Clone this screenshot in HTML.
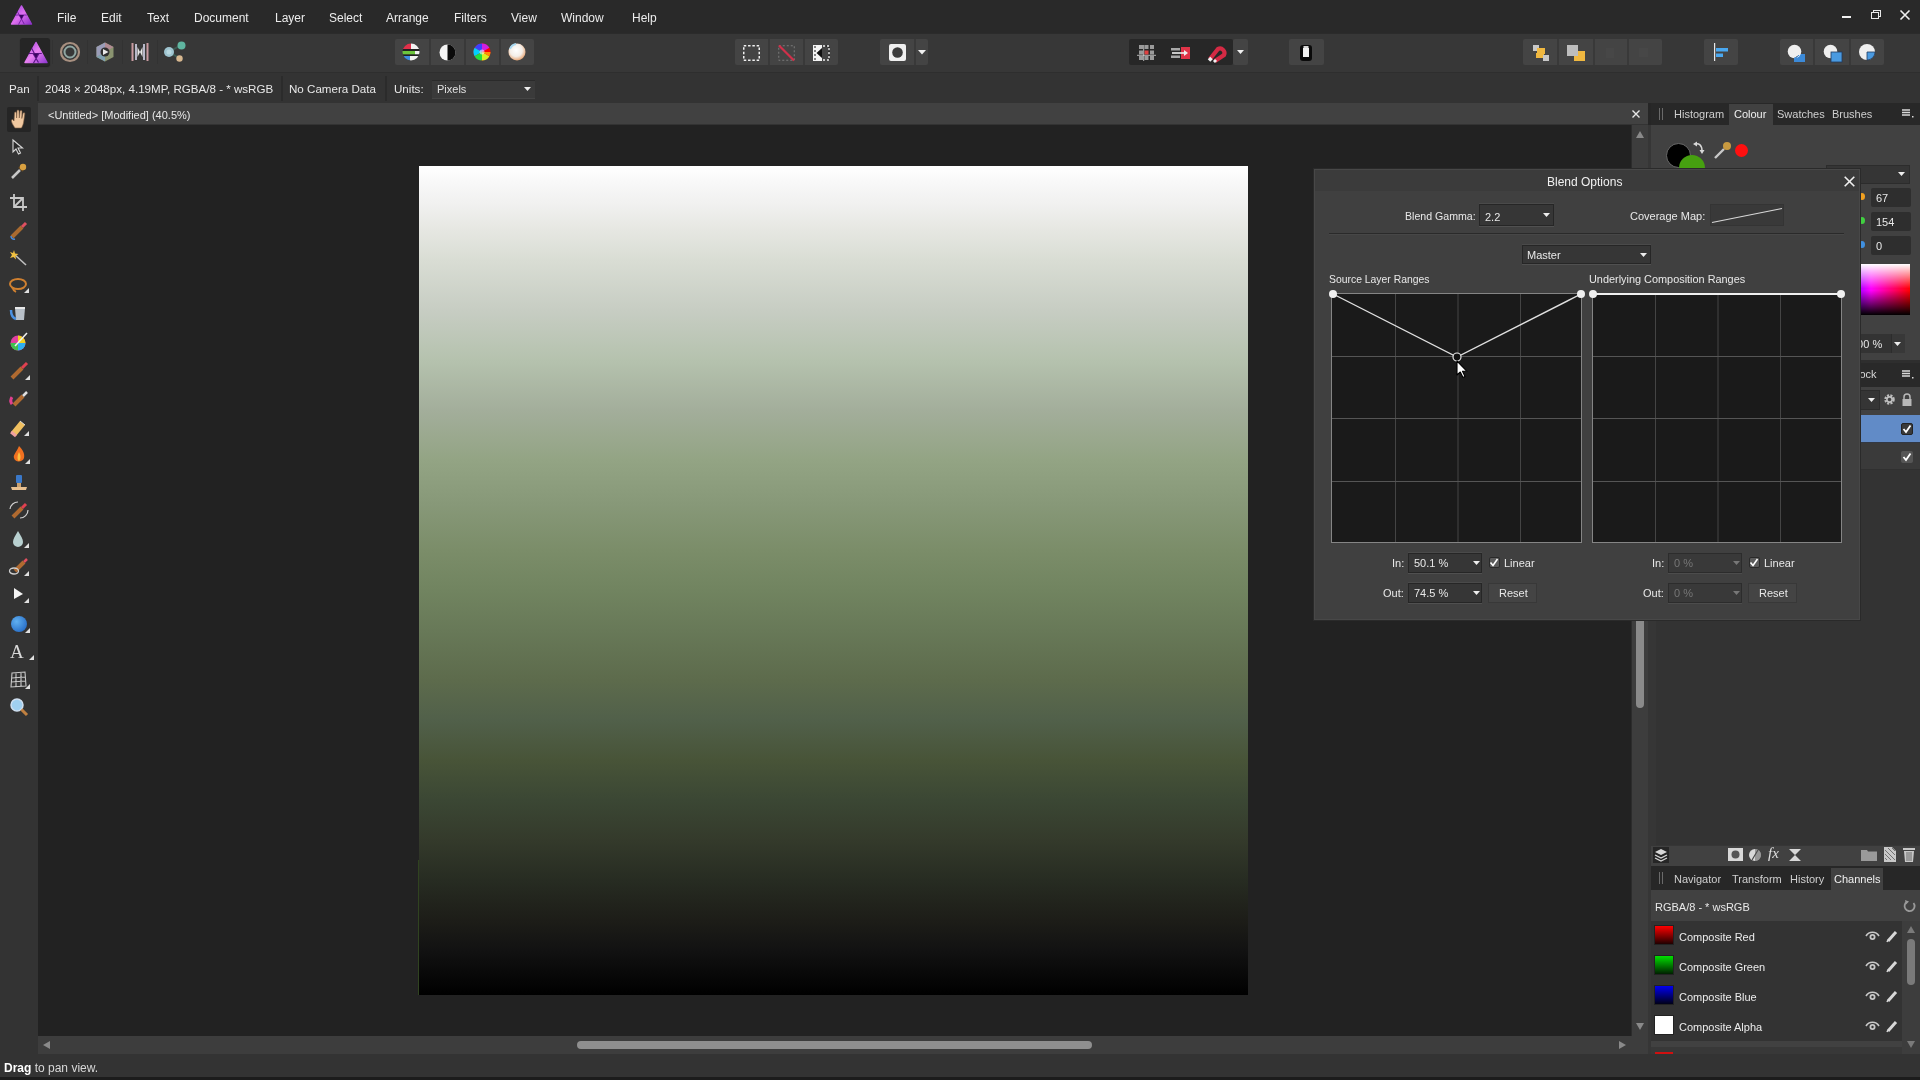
<!DOCTYPE html>
<html><head><meta charset="utf-8">
<style>
*{margin:0;padding:0;box-sizing:border-box}
html,body{width:1920px;height:1080px;overflow:hidden;background:#2e2e2e;font-family:"Liberation Sans",sans-serif;color:#e8e8e8}
.a{position:absolute}
.t{position:absolute;white-space:nowrap;font-size:12px;line-height:14px;will-change:transform}
svg{position:absolute;overflow:visible}
#menubar{left:0;top:0;width:1920px;height:33px;background:#292929}
#toolbar{left:0;top:33px;width:1920px;height:40px;background:#373737;border-top:1px solid #2b2b2b;border-bottom:1px solid #2e2e2e}
#ctx{left:0;top:73px;width:1920px;height:30px;background:#333333}
#tabbar{left:38px;top:103px;width:1612px;height:22px;background:#414141;border-bottom:1px solid #333333}
#tools{left:0;top:103px;width:38px;height:951px;background:#333333}
#canvasbg{left:38px;top:125px;width:1593px;height:911px;background:#222222}
#doc{left:419px;top:166px;width:829px;height:829px;background:linear-gradient(to bottom,#ffffff 0px,#f7f7f7 19px,#f1f1f0 37px,#e6e7e2 64px,#d9ddd4 94px,#c7cdc3 144px,#b5c2ae 194px,#a3ae9b 244px,#93a484 294px,#879878 339px,#7b8d69 384px,#718460 424px,#687958 464px,#5d6b4c 514px,#51604a 554px,#485438 594px,#3b4734 634px,#343a2b 674px,#272c22 714px,#1d1d18 754px,#121212 784px,#060606 814px,#000 829px)}
#vscroll{left:1631px;top:125px;width:17px;height:911px;background:#3d3d3d}
#hscroll{left:38px;top:1036px;width:1610px;height:18px;background:#3d3d3d}
#status{left:0;top:1054px;width:1920px;height:26px;background:#333333;border-bottom:3px solid #1c1c1c}
#rpanel{left:1648px;top:103px;width:272px;height:951px;background:#333333;border-left:8px solid #363636}
.menu{font-size:12px;top:11px;color:#ececec}
.grp{position:absolute;top:39px;height:26px;background:#444444;border-radius:2px}
.sep{position:absolute;top:39px;width:2px;height:26px;background:#393939}
.ctxt{font-size:11.6px;top:82px;color:#e8e8e8}
.csep{position:absolute;top:76px;width:2px;height:25px;background:#2b2b2b}
</style></head><body>
<div id="menubar" class="a"></div>
<div id="toolbar" class="a"></div>
<div id="ctx" class="a"></div>
<div id="tools" class="a"></div>
<div id="tabbar" class="a"></div>
<div id="canvasbg" class="a"></div>
<div id="doc" class="a"></div>
<div id="vscroll" class="a"></div>
<div id="hscroll" class="a"></div>
<div id="status" class="a"></div>
<div id="rpanel" class="a"></div>

<!-- app logo -->
<svg style="left:10px;top:5px" width="23" height="20" viewBox="0 0 24 22">
 <defs><linearGradient id="lg1" x1="0" y1="0" x2="1" y2="1"><stop offset="0" stop-color="#9a40e0"/><stop offset="0.5" stop-color="#e070f0"/><stop offset="1" stop-color="#8a30c8"/></linearGradient></defs>
 <path d="M12 1 L23 21 L1 21 Z" fill="url(#lg1)" stroke="url(#lg1)" stroke-width="1.5" stroke-linejoin="round"/>
 <path d="M5 11 L17.8 11 M14.5 11 L8.7 21.5 M9.5 11 L15 21 M12 15.5 L7 6.5" stroke="#5a1090" stroke-width="1" opacity="0.8"/>
 <path d="M9.5 11 L14.5 11 L12 15.5 Z" fill="#3a0560"/>
</svg>
<!-- menu text -->
<div class="t menu" style="left:57px">File</div>
<div class="t menu" style="left:101px">Edit</div>
<div class="t menu" style="left:147px">Text</div>
<div class="t menu" style="left:194px">Document</div>
<div class="t menu" style="left:275px">Layer</div>
<div class="t menu" style="left:329px">Select</div>
<div class="t menu" style="left:386px">Arrange</div>
<div class="t menu" style="left:454px">Filters</div>
<div class="t menu" style="left:511px">View</div>
<div class="t menu" style="left:561px">Window</div>
<div class="t menu" style="left:632px">Help</div>
<!-- window controls -->
<div class="a" style="left:1842px;top:16px;width:9px;height:2px;background:#f0f0f0"></div>
<div class="a" style="left:1873px;top:10px;width:8px;height:7px;border:1.5px solid #e8e8e8;border-left-width:1.5px"></div>
<div class="a" style="left:1871px;top:12px;width:8px;height:7px;border:1.5px solid #e8e8e8;background:#262626"></div>
<svg style="left:1900px;top:10px" width="10" height="10" viewBox="0 0 10 10"><path d="M0.5 0.5 L9.5 9.5 M9.5 0.5 L0.5 9.5" stroke="#f0f0f0" stroke-width="1.6"/></svg>
<!-- toolbar: personas -->
<div class="a" style="left:20px;top:38px;width:30px;height:28px;background:#252525;border-radius:3px;box-shadow:0 1px 1px #1e1e1e"></div>
<div class="a" style="left:52px;top:40px;width:1px;height:24px;background:#323232"></div>
<div class="a" style="left:87px;top:40px;width:1px;height:24px;background:#323232"></div>
<div class="a" style="left:122px;top:40px;width:1px;height:24px;background:#323232"></div>
<div class="a" style="left:157px;top:40px;width:1px;height:24px;background:#323232"></div>
<svg style="left:24px;top:41px" width="24" height="23" viewBox="0 0 24 22">
 <defs><linearGradient id="lg2" x1="0" y1="0" x2="1" y2="1"><stop offset="0" stop-color="#a040e0"/><stop offset="0.5" stop-color="#e880f0"/><stop offset="1" stop-color="#9038d0"/></linearGradient></defs>
 <path d="M12 1 L23 21 L1 21 Z" fill="url(#lg2)" stroke="url(#lg2)" stroke-width="1.5" stroke-linejoin="round"/>
 <path d="M4.5 12 L17.8 12 M15 12 L9.5 21.5 M9 12 L14.5 21 M12.5 16 L7.5 6.5" stroke="#4a0878" stroke-width="1.2" opacity="0.85"/>
 <path d="M9.5 12 L14.5 12 L12 16.5 Z" fill="#3a0560"/>
</svg>
<svg style="left:59px;top:41px" width="22" height="22" viewBox="0 0 22 22">
 <circle cx="11" cy="11" r="9" fill="none" stroke="#a89080" stroke-width="2.2"/>
 <circle cx="11" cy="11" r="5.5" fill="none" stroke="#8fa6a2" stroke-width="2"/>
</svg>
<svg style="left:95px;top:42px" width="20" height="20" viewBox="0 0 20 20">
 <path d="M10 0.5 L18.5 5 L18.5 15 L10 19.5 L1.5 15 L1.5 5 Z" fill="#8a9470"/>
 <path d="M10 0.5 L18.5 5 L10 10 Z" fill="#b08a92"/>
 <path d="M1.5 5 L10 0.5 L10 10 L1.5 15Z" fill="#9a9cb8"/>
 <path d="M1.5 15 L10 10 L10 19.5 Z" fill="#7fa0b0"/>
 <circle cx="10" cy="10" r="4.5" fill="#2f2f2f"/>
 <path d="M8 7 L13.5 10 L8 13 Z" fill="#e8e8e8"/>
</svg>
<svg style="left:130px;top:42px" width="20" height="20" viewBox="0 0 20 20">
 <rect x="1.5" y="1" width="2" height="18" fill="#c89aa0"/>
 <rect x="5" y="2" width="2" height="16" fill="#b8b8c8"/>
 <rect x="13" y="2" width="2" height="16" fill="#b8b8c8"/>
 <rect x="16.5" y="1" width="2" height="18" fill="#c89aa0"/>
 <path d="M7.5 5 L10 10 L7.5 15 Z M12.5 5 L10 10 L12.5 15 Z" fill="#e8e8e8"/>
</svg>
<svg style="left:163px;top:41px" width="24" height="22" viewBox="0 0 24 22">
 <path d="M6 11 L18 4 M6 11 L16 17" stroke="#3b5a52" stroke-width="2"/>
 <circle cx="6" cy="11" r="5" fill="#9ec4d0"/>
 <circle cx="6" cy="11" r="2.5" fill="#b8d8e0"/>
 <circle cx="18.5" cy="4.5" r="4" fill="#5fb5a0"/>
 <circle cx="16.5" cy="17.5" r="3.2" fill="#d8b890"/>
</svg>

<!-- group 2 -->
<div class="grp" style="left:395px;width:139px"></div>
<div class="sep" style="left:429px"></div><div class="sep" style="left:464px"></div><div class="sep" style="left:499px"></div>
<svg style="left:402px;top:43px" width="18" height="18" viewBox="0 0 18 18">
 <defs><clipPath id="c1"><circle cx="9" cy="9" r="8.5"/></clipPath></defs>
 <g clip-path="url(#c1)">
 <rect x="0" y="0" width="9" height="6" fill="#e0304a"/><rect x="9" y="0" width="9" height="6" fill="#f2f2f2"/>
 <rect x="0" y="6" width="18" height="2" fill="#202020"/>
 <rect x="0" y="8" width="13" height="3.5" fill="#6cc43c"/><rect x="13" y="8" width="5" height="3.5" fill="#f0f0f0"/>
 <rect x="0" y="11.5" width="18" height="1.5" fill="#202020"/>
 <rect x="0" y="13" width="8" height="5" fill="#3c8ae0"/><rect x="8" y="13" width="10" height="5" fill="#f2f2f2"/>
 </g>
</svg>
<svg style="left:439px;top:44px" width="17" height="17" viewBox="0 0 17 17">
 <circle cx="8.5" cy="8.5" r="8" fill="#f4f4f4"/>
 <path d="M8.5 0.5 A8 8 0 0 1 8.5 16.5 Z" fill="#0a0a0a"/>
</svg>
<svg style="left:473px;top:43px" width="18" height="18" viewBox="0 0 18 18">
 <circle cx="9" cy="9" r="8.5" fill="#ff0000"/>
 <path d="M9 9 L9 0.5 A8.5 8.5 0 0 0 1.6 4.8 Z" fill="#3a40ff"/>
 <path d="M9 9 L1.6 4.8 A8.5 8.5 0 0 0 1.6 13.2 Z" fill="#00d0ff"/>
 <path d="M9 9 L1.6 13.2 A8.5 8.5 0 0 0 9 17.5 Z" fill="#20e040"/>
 <path d="M9 9 L9 17.5 A8.5 8.5 0 0 0 16.4 13.2 Z" fill="#d8f020"/>
 <path d="M9 9 L16.4 13.2 A8.5 8.5 0 0 0 17.5 9 Z" fill="#ff9000"/>
 <path d="M9 9 L9 0.5 A8.5 8.5 0 0 1 16.4 4.8 Z" fill="#d020e0"/>
 <circle cx="9" cy="9" r="2.5" fill="#f0f0f0" opacity="0.6"/>
</svg>
<svg style="left:508px;top:43px" width="18" height="18" viewBox="0 0 18 18">
 <defs><radialGradient id="rg1" cx="0.45" cy="0.4" r="0.6"><stop offset="0" stop-color="#ffffff"/><stop offset="0.6" stop-color="#f4eee8"/><stop offset="1" stop-color="#e8a878"/></radialGradient></defs>
 <circle cx="9" cy="9" r="8.5" fill="url(#rg1)"/>
 <path d="M2 6 A8 8 0 0 1 8 1" stroke="#a8d8f0" stroke-width="2" fill="none"/>
</svg>

<!-- group 3 -->
<div class="grp" style="left:735px;width:103px"></div>
<div class="sep" style="left:768px"></div><div class="sep" style="left:803px"></div>
<svg style="left:743px;top:45px" width="17" height="16" viewBox="0 0 17 16"><rect x="0.75" y="0.75" width="15.5" height="14.5" fill="none" stroke="#f0f0f0" stroke-width="1.5" stroke-dasharray="2.5 1.8"/></svg>
<svg style="left:778px;top:45px" width="17" height="16" viewBox="0 0 17 16"><rect x="0.75" y="0.75" width="15.5" height="14.5" fill="none" stroke="#7a7a7a" stroke-width="1" stroke-dasharray="2 2"/><path d="M1 0.5 L16 15.5" stroke="#d0304a" stroke-width="2.2"/></svg>
<svg style="left:813px;top:45px" width="17" height="16" viewBox="0 0 17 16"><rect x="0" y="0" width="9" height="16" fill="#f4f4f4"/><path d="M9 3 L3.5 8 L9 13 Z" fill="#101010"/><path d="M2 1 L2 15 M13 1 L16 1 L16 15 L13 15" stroke="#101010" stroke-width="1" stroke-dasharray="2 2" fill="none"/><path d="M10 1 L16 1 L16 15 L10 15" stroke="#f0f0f0" stroke-width="1.3" stroke-dasharray="2 2" fill="none"/></svg>

<!-- group 4 -->
<div class="grp" style="left:880px;width:48px"></div>
<div class="sep" style="left:914px"></div>
<svg style="left:889px;top:44px" width="17" height="17" viewBox="0 0 17 17"><rect x="0" y="0" width="17" height="17" rx="2" fill="#efefef"/><circle cx="8.5" cy="8.5" r="5.3" fill="#3a3a3a"/></svg>
<svg style="left:918px;top:50px" width="8" height="5" viewBox="0 0 8 5"><path d="M0 0 L8 0 L4 4.5 Z" fill="#f2f2f2"/></svg>

<!-- group 5 -->
<div class="grp" style="left:1129px;width:104px;background:#272727"></div>
<div class="grp" style="left:1233px;width:15px;background:#444444"></div>
<svg style="left:1137px;top:45px" width="19" height="16" viewBox="0 0 19 16">
 <rect x="2" y="0" width="4" height="4" fill="#9a9a9a"/><rect x="7.5" y="0" width="4" height="4" fill="#9a9a9a"/><rect x="13" y="0" width="4" height="4" fill="#9a9a9a"/>
 <rect x="2" y="5.5" width="4" height="4" fill="#9a9a9a"/><rect x="7.5" y="5.5" width="4" height="4" fill="#e04040"/><rect x="13" y="5.5" width="4" height="4" fill="#9a9a9a"/>
 <rect x="2" y="11" width="4" height="4" fill="#9a9a9a"/><rect x="7.5" y="11" width="4" height="4" fill="#9a9a9a"/><rect x="13" y="11" width="4" height="4" fill="#9a9a9a"/>
 <path d="M0 10.3 L19 10.3 M6.7 0 L6.7 16" stroke="#d8d8d8" stroke-width="0.8"/>
</svg>
<svg style="left:1171px;top:47px" width="20" height="12" viewBox="0 0 20 12">
 <rect x="0" y="1" width="9" height="2.5" fill="#a8a8a8"/><rect x="0" y="8.5" width="9" height="2.5" fill="#a8a8a8"/>
 <rect x="10" y="0" width="9" height="12" fill="#e03448"/>
 <path d="M1 6 L15 6" stroke="#f0f0f0" stroke-width="1.6"/><path d="M13 3 L17 6 L13 9 Z" fill="#f0f0f0"/>
</svg>
<svg style="left:1206px;top:44px" width="20" height="18" viewBox="0 0 20 18">
 <path d="M4 15 L12 5 A4.5 4.5 0 0 1 18 11 L9 17" fill="none" stroke="#d42a44" stroke-width="4.2"/>
 <path d="M3 14 L5.5 16.5" stroke="#f0f0f0" stroke-width="3.5"/><path d="M8 16 L10 18" stroke="#f0f0f0" stroke-width="3"/>
</svg>
<svg style="left:1237px;top:50px" width="7" height="5" viewBox="0 0 7 5"><path d="M0 0 L7 0 L3.5 4 Z" fill="#f0f0f0"/></svg>

<!-- group 6 -->
<div class="grp" style="left:1289px;width:35px"></div>
<svg style="left:1299px;top:44px" width="14" height="18" viewBox="0 0 14 18"><rect x="1" y="1" width="12" height="16" rx="3" fill="#0a0a0a"/><rect x="4" y="4" width="6" height="9" fill="#f2f2f2"/><rect x="4.5" y="2" width="5" height="2" fill="#d8d8d8"/></svg>

<!-- group 7 -->
<div class="grp" style="left:1523px;width:139px"></div>
<div class="sep" style="left:1557px"></div><div class="sep" style="left:1593px"></div><div class="sep" style="left:1627px"></div>
<svg style="left:1531px;top:44px" width="20" height="18" viewBox="0 0 20 18">
 <rect x="2" y="1" width="6" height="6" fill="#c8c8c8"/><rect x="6" y="4" width="8" height="6" fill="#f0b840"/><rect x="5" y="9" width="8" height="5" fill="#f0b840"/><rect x="12" y="11" width="6" height="6" fill="#c8c8c8"/>
</svg>
<svg style="left:1566px;top:44px" width="20" height="18" viewBox="0 0 20 18">
 <rect x="12" y="7" width="7" height="10" fill="#f0b840"/><rect x="8" y="12" width="11" height="5" fill="#f0b840"/><rect x="1" y="1" width="11" height="11" fill="#bdbdbd"/>
</svg>
<svg style="left:1603px;top:46px" width="16" height="14" viewBox="0 0 16 14"><rect x="3" y="2" width="8" height="10" fill="#474747"/></svg>
<svg style="left:1637px;top:46px" width="16" height="14" viewBox="0 0 16 14"><rect x="2" y="2" width="9" height="9" fill="#474747"/></svg>

<!-- group 8 -->
<div class="grp" style="left:1704px;width:34px"></div>
<svg style="left:1713px;top:43px" width="18" height="18" viewBox="0 0 18 18"><rect x="1" y="0" width="1.2" height="18" fill="#e8e8e8"/><rect x="3" y="5" width="12" height="3.5" fill="#4aa8f0"/><rect x="3" y="10.5" width="7" height="3.5" fill="#4aa8f0"/></svg>

<!-- group 9 -->
<div class="grp" style="left:1780px;width:104px"></div>
<div class="sep" style="left:1813px"></div><div class="sep" style="left:1849px"></div>
<svg style="left:1786px;top:43px" width="22" height="20" viewBox="0 0 22 20"><path d="M8 11 L19 11 L19 19 L8 19 Z" fill="#3c8ad8"/><circle cx="8.5" cy="8.5" r="6.8" fill="#efefef"/><path d="M13 12 A6.8 6.8 0 0 1 8 15.3" stroke="#3c8ad8" stroke-width="1"/></svg>
<svg style="left:1822px;top:43px" width="22" height="20" viewBox="0 0 22 20"><circle cx="8.5" cy="8.5" r="6.8" fill="#efefef"/><rect x="9" y="9" width="11" height="10" fill="#4a9ae0" stroke="#1e3a60" stroke-width="0.8"/></svg>
<svg style="left:1857px;top:42px" width="22" height="20" viewBox="0 0 22 20"><circle cx="10" cy="10" r="8" fill="#efefef"/><path d="M10 10 L18 10 A8 8 0 0 1 10 18 Z" fill="#4a9ae0" stroke="#1e3a60" stroke-width="0.8"/></svg>

<!-- context bar -->
<div class="t ctxt" style="left:9px">Pan</div>
<div class="csep" style="left:37px"></div>
<div class="t ctxt" style="left:45px">2048 × 2048px, 4.19MP, RGBA/8 - * wsRGB</div>
<div class="csep" style="left:281px"></div>
<div class="t ctxt" style="left:289px">No Camera Data</div>
<div class="csep" style="left:385px"></div>
<div class="t ctxt" style="left:394px">Units:</div>
<div class="a" style="left:432px;top:80px;width:103px;height:19px;background:#3a3a3a;border-top:1px solid #2a2a2a;border-bottom:1px solid #444"></div>
<div class="t" style="left:437px;top:82px;font-size:11px;color:#e0e0e0">Pixels</div>
<svg style="left:524px;top:87px" width="7" height="5" viewBox="0 0 7 5"><path d="M0 0 L7 0 L3.5 4 Z" fill="#eeeeee"/></svg>

<!-- document tab -->
<div class="t" style="left:48px;top:108px;font-size:11px;color:#e8e8e8">&lt;Untitled&gt; [Modified] (40.5%)</div>
<svg style="left:1632px;top:110px" width="8" height="8" viewBox="0 0 8 8"><path d="M0.5 0.5 L7.5 7.5 M7.5 0.5 L0.5 7.5" stroke="#e8e8e8" stroke-width="1.4"/></svg>
<!-- left tools -->
<div class="a" style="left:7px;top:107px;width:24px;height:25px;background:#252525;border-radius:2px"></div>
<svg style="left:10px;top:109px" width="18" height="20" viewBox="0 0 18 20">
 <path d="M5 19 C3 16 1 13 1.5 11 C2 10 3 10.5 4 12 L4.5 4 C4.6 2.5 6.3 2.5 6.4 4 L6.6 9 L7 2 C7.1 0.5 8.9 0.5 9 2 L9.3 9 L10 2.5 C10.2 1 12 1 12 2.5 L11.8 9.5 L13 4.5 C13.3 3.2 15 3.4 14.8 4.8 L13.8 12 C13.5 15 12.5 17 11.5 19 Z" fill="#f0c8a0" stroke="#7a5a40" stroke-width="0.6"/>
</svg>
<svg style="left:12px;top:139px" width="14" height="16" viewBox="0 0 14 16"><path d="M1 1 L1 13 L4 10 L6.5 15 L8.5 14 L6 9 L10.5 9 Z" fill="#2a2a2a" stroke="#d8d8d8" stroke-width="1.1"/></svg>
<svg style="left:10px;top:163px" width="18" height="17" viewBox="0 0 18 17"><path d="M2 15 L10 7" stroke="#c8c8c8" stroke-width="2.5"/><path d="M9 4 L13 8" stroke="#6a4a20" stroke-width="2"/><circle cx="13" cy="4" r="3.2" fill="#d8a040"/></svg>
<svg style="left:10px;top:194px" width="18" height="17" viewBox="0 0 18 17"><path d="M4 0 L4 13 L17 13 M0 4 L13 4 L13 17 M4 13 L13 4" stroke="#c8c8c8" stroke-width="1.8" fill="none"/></svg>
<svg style="left:9px;top:222px" width="20" height="18" viewBox="0 0 20 18"><path d="M3 15 L13 5" stroke="#a86a30" stroke-width="4"/><path d="M13 5 L17 1" stroke="#e05060" stroke-width="3"/><path d="M2 14 A3 3 0 0 0 6 17" stroke="#4a8ad8" stroke-width="1.5" fill="none"/></svg>
<svg style="left:9px;top:249px" width="20" height="18" viewBox="0 0 20 18"><path d="M6 6 L17 16" stroke="#c0c0c0" stroke-width="1.6"/><path d="M5 1 L6 4.5 L9.5 5 L6.5 7 L7 10.5 L4.5 8 L1 9 L3 6 L1 3 L4 4 Z" fill="#f0c040"/></svg>
<svg style="left:8px;top:276px" width="22" height="18" viewBox="0 0 22 18"><ellipse cx="10" cy="8" rx="8" ry="5" fill="none" stroke="#d08030" stroke-width="2"/><path d="M4 11 C5 14 6 15 8 16" stroke="#d08030" stroke-width="1.8" fill="none"/><path d="M21 12 L21 17 L16 17 Z" fill="#e0e0e0"/></svg>
<svg style="left:9px;top:304px" width="20" height="18" viewBox="0 0 20 18"><path d="M6 4 L16 4 L15 16 L7 16 Z" fill="#b8c0c8"/><path d="M2 6 C2 12 4 14 7 15" stroke="#4a90e0" stroke-width="2.5" fill="none"/><path d="M6 4 L16 4" stroke="#e8e8e8" stroke-width="2"/></svg>
<svg style="left:9px;top:332px" width="20" height="20" viewBox="0 0 20 20"><circle cx="9" cy="11" r="7.5" fill="#e040a0"/><path d="M9 11 L9 3.5 A7.5 7.5 0 0 1 16.5 11 Z" fill="#f0d020"/><path d="M9 11 L16.5 11 A7.5 7.5 0 0 1 9 18.5 Z" fill="#30b0f0"/><path d="M9 11 L9 18.5 A7.5 7.5 0 0 1 1.5 11 Z" fill="#40c050"/><path d="M6 14 L18 1" stroke="#f0f0f0" stroke-width="1.5"/></svg>
<svg style="left:9px;top:361px" width="22" height="20" viewBox="0 0 22 20"><path d="M3 17 L13 7" stroke="#b06a30" stroke-width="4"/><path d="M13 7 L18 2" stroke="#e04050" stroke-width="3"/><path d="M21 14 L21 19 L16 19 Z" fill="#e0e0e0"/></svg>
<svg style="left:8px;top:389px" width="22" height="20" viewBox="0 0 22 20"><path d="M4 15 A6 6 0 0 1 4 8" stroke="#e04090" stroke-width="3" fill="none"/><path d="M6 16 L15 7" stroke="#b06a30" stroke-width="4"/><path d="M15 7 L19 3" stroke="#e0e0e0" stroke-width="2.5"/></svg>
<svg style="left:8px;top:417px" width="22" height="20" viewBox="0 0 22 20"><path d="M3 15 L12 4 L17 8 L8 19 Z" fill="#f0c060"/><path d="M3 15 L8 19" stroke="#f0a0a0" stroke-width="3"/><path d="M12 4 L17 8" stroke="#e0e0e0" stroke-width="1"/><path d="M21 14 L21 19 L16 19 Z" fill="#e0e0e0"/></svg>
<svg style="left:9px;top:445px" width="22" height="20" viewBox="0 0 22 20"><path d="M10 1 C14 5 16 9 15 13 C14 17 6 18 5 13 C4 10 7 8 10 1 Z" fill="#f07020"/><path d="M10 7 C12 10 12 14 10 16 C8 15 8 11 10 7Z" fill="#f8c040"/><path d="M21 14 L21 19 L16 19 Z" fill="#e0e0e0"/></svg>
<svg style="left:9px;top:474px" width="20" height="18" viewBox="0 0 20 18"><rect x="7" y="1" width="6" height="8" rx="1" fill="#3a78c8"/><path d="M2 13 L18 13 L17 16 L3 16 Z" fill="#e8c090"/><rect x="8" y="9" width="4" height="4" fill="#c8a070"/></svg>
<svg style="left:9px;top:501px" width="20" height="18" viewBox="0 0 20 18"><path d="M4 16 L13 7" stroke="#b06a30" stroke-width="4"/><path d="M13 7 L17 3" stroke="#e04050" stroke-width="3"/><path d="M1 8 A8 8 0 0 1 9 1 M11 17 A8 8 0 0 0 19 9" stroke="#d0d0d0" stroke-width="1.2" fill="none"/></svg>
<svg style="left:10px;top:529px" width="20" height="20" viewBox="0 0 20 20"><path d="M8 2 C11 7 13 10 13 13 A5 5 0 0 1 3 13 C3 10 5 7 8 2 Z" fill="#b8d0d0"/><path d="M19 14 L19 19 L14 19 Z" fill="#e0e0e0"/></svg>
<svg style="left:8px;top:557px" width="22" height="20" viewBox="0 0 22 20"><path d="M7 14 L16 5" stroke="#b06a30" stroke-width="4"/><path d="M16 5 L19 2" stroke="#e05060" stroke-width="2.5"/><ellipse cx="6" cy="14" rx="4.5" ry="3" fill="none" stroke="#d0d0d0" stroke-width="1.3"/><path d="M21 14 L21 19 L16 19 Z" fill="#e0e0e0"/></svg>
<svg style="left:12px;top:586px" width="20" height="18" viewBox="0 0 20 18"><path d="M2 2 L11 8 L2 13 Z" fill="#f4f4f4"/><path d="M17 12 L17 17 L12 17 Z" fill="#e0e0e0"/></svg>
<svg style="left:9px;top:614px" width="22" height="20" viewBox="0 0 22 20"><defs><radialGradient id="rgb1" cx="0.35" cy="0.35" r="0.7"><stop offset="0" stop-color="#60b0f0"/><stop offset="1" stop-color="#2a70c8"/></radialGradient></defs><circle cx="10" cy="10" r="8" fill="url(#rgb1)"/><path d="M21 14 L21 19 L16 19 Z" fill="#e0e0e0"/></svg>
<div class="t" style="left:10px;top:642px;font-family:'Liberation Serif',serif;font-size:19px;line-height:19px;color:#d8d8d8">A</div>
<svg style="left:29px;top:655px" width="6" height="6" viewBox="0 0 6 6"><path d="M5 0 L5 5 L0 5 Z" fill="#e0e0e0"/></svg>
<svg style="left:9px;top:670px" width="22" height="20" viewBox="0 0 22 20"><path d="M3 3 L16 2 L17 16 L2 17 Z M3 8 L16 7 M2 12 L17 11 M7 2.5 L7 16.5 M12 2.2 L12 16.4" stroke="#c8c8c8" stroke-width="1.1" fill="none"/><path d="M21 14 L21 19 L16 19 Z" fill="#e0e0e0"/></svg>
<svg style="left:9px;top:697px" width="20" height="20" viewBox="0 0 20 20"><circle cx="8" cy="8" r="6" fill="#a0d0f0" stroke="#d0e0f0" stroke-width="1.5"/><path d="M12.5 12.5 L18 18" stroke="#c08040" stroke-width="3"/></svg>

<!-- canvas details -->
<div class="a" style="left:418px;top:860px;width:1px;height:135px;background:#3a5a20;opacity:0.6"></div>

<!-- vertical scroll -->
<div class="a" style="left:1631px;top:125px;width:1px;height:911px;background:#2c2c2c"></div>
<svg style="left:1636px;top:131px" width="8" height="7" viewBox="0 0 8 7"><path d="M0 7 L8 7 L4 0 Z" fill="#8a8a8a"/></svg>
<div class="a" style="left:1636px;top:612px;width:8px;height:96px;background:#8a8a8a;border-radius:4px"></div>
<svg style="left:1636px;top:1023px" width="8" height="7" viewBox="0 0 8 7"><path d="M0 0 L8 0 L4 7 Z" fill="#8a8a8a"/></svg>
<!-- horizontal scroll -->
<svg style="left:43px;top:1041px" width="7" height="8" viewBox="0 0 7 8"><path d="M7 0 L7 8 L0 4 Z" fill="#8a8a8a"/></svg>
<div class="a" style="left:577px;top:1041px;width:515px;height:8px;background:#8f8f8f;border-radius:4px"></div>
<svg style="left:1619px;top:1041px" width="7" height="8" viewBox="0 0 7 8"><path d="M0 0 L0 8 L7 4 Z" fill="#8a8a8a"/></svg>
<!-- status -->
<div class="t" style="left:4px;top:1061px;font-size:12px;color:#d8d8d8"><b style="color:#fff">Drag</b> to pan view.</div>
<!-- right panel -->
<div class="a" style="left:1648px;top:103px;width:3px;height:22px;background:#262626"></div>
<div class="a" style="left:1651px;top:103px;width:269px;height:22px;background:#282828"></div>
<div class="a" style="left:1659px;top:108px;width:1px;height:12px;background:#6a6a6a"></div>
<div class="a" style="left:1662px;top:108px;width:1px;height:12px;background:#6a6a6a"></div>
<div class="a" style="left:1729px;top:104px;width:44px;height:21px;background:#414141"></div>
<div class="t" style="left:1674px;top:107px;font-size:11px;color:#cfcfcf">Histogram</div>
<div class="t" style="left:1734px;top:107px;font-size:11px;color:#f0f0f0">Colour</div>
<div class="t" style="left:1777px;top:107px;font-size:11px;color:#cfcfcf">Swatches</div>
<div class="t" style="left:1832px;top:107px;font-size:11px;color:#cfcfcf">Brushes</div>
<svg style="left:1902px;top:109px" width="12" height="10" viewBox="0 0 12 10"><path d="M0 1 L8 1 M0 3.5 L8 3.5 M0 6 L8 6" stroke="#d8d8d8" stroke-width="1.5"/><rect x="10" y="7" width="1.5" height="1.5" fill="#d8d8d8"/></svg>
<!-- colour panel body -->
<div class="a" style="left:1651px;top:125px;width:269px;height:236px;background:#414141"></div>
<div class="a" style="left:1666px;top:143px;width:25px;height:25px;border-radius:50%;background:#000;border:1.5px solid #6a6a6a"></div>
<div class="a" style="left:1679px;top:155px;width:26px;height:26px;border-radius:50%;background:#46a010"></div>
<svg style="left:1693px;top:141px" width="12" height="14" viewBox="0 0 12 14"><path d="M2 3 C6 2 9 4 9 10" stroke="#d8d8d8" stroke-width="1.5" fill="none"/><path d="M0 3 L4 0.5 L4 5.5 Z M6.5 9 L11.5 9 L9 13 Z" fill="#d8d8d8"/></svg>
<svg style="left:1713px;top:141px" width="20" height="19" viewBox="0 0 20 19"><path d="M2 17 L11 8" stroke="#c8c8c8" stroke-width="2.4"/><circle cx="14" cy="5" r="4" fill="#c89a40"/></svg>
<div class="a" style="left:1735px;top:144px;width:13px;height:13px;border-radius:50%;background:#ff1010"></div>
<div class="a" style="left:1826px;top:165px;width:84px;height:19px;background:#353535;border:1px solid #2c2c2c"></div>
<svg style="left:1898px;top:172px" width="7" height="5" viewBox="0 0 7 5"><path d="M0 0 L7 0 L3.5 4 Z" fill="#eeeeee"/></svg>
<div class="a" style="left:1859px;top:193px;width:6px;height:7px;border-radius:50%;background:#f0a020"></div>
<div class="a" style="left:1859px;top:217px;width:6px;height:7px;border-radius:50%;background:#40d040"></div>
<div class="a" style="left:1859px;top:241px;width:6px;height:7px;border-radius:50%;background:#4090e0"></div>
<div class="a" style="left:1871px;top:188px;width:40px;height:19px;background:#2e2e2e;border-radius:2px"></div>
<div class="a" style="left:1871px;top:212px;width:40px;height:19px;background:#2e2e2e;border-radius:2px"></div>
<div class="a" style="left:1871px;top:236px;width:40px;height:19px;background:#2e2e2e;border-radius:2px"></div>
<div class="t" style="left:1876px;top:191px;font-size:11px;color:#e8e8e8">67</div>
<div class="t" style="left:1876px;top:215px;font-size:11px;color:#e8e8e8">154</div>
<div class="t" style="left:1876px;top:239px;font-size:11px;color:#e8e8e8">0</div>
<div class="a" style="left:1860px;top:264px;width:50px;height:51px;background:linear-gradient(to bottom,#fff 0%,rgba(255,255,255,0) 48%,rgba(0,0,0,0) 52%,#000 100%),linear-gradient(to right,#b000ff 0%,#ff00ff 22%,#ff0090 55%,#ff0000 100%)"></div>
<div class="a" style="left:1826px;top:334px;width:66px;height:19px;background:#333333"></div>
<div class="a" style="left:1891px;top:334px;width:14px;height:19px;background:#383838;border-left:1px solid #2c2c2c"></div>
<div class="t" style="left:1851px;top:337px;font-size:11px;color:#e8e8e8">100 %</div>
<svg style="left:1894px;top:342px" width="7" height="5" viewBox="0 0 7 5"><path d="M0 0 L7 0 L3.5 4 Z" fill="#eeeeee"/></svg>
<div class="a" style="left:1651px;top:360px;width:269px;height:3px;background:#2e2e2e"></div>
<!-- layers panel -->
<div class="a" style="left:1651px;top:363px;width:269px;height:24px;background:#292929"></div>
<div class="t" style="left:1849px;top:367px;font-size:11px;color:#d8d8d8">Stock</div>
<svg style="left:1902px;top:370px" width="12" height="10" viewBox="0 0 12 10"><path d="M0 1 L8 1 M0 3.5 L8 3.5 M0 6 L8 6" stroke="#d8d8d8" stroke-width="1.5"/><rect x="10" y="7" width="1.5" height="1.5" fill="#d8d8d8"/></svg>
<div class="a" style="left:1651px;top:387px;width:269px;height:28px;background:#414141"></div>
<div class="a" style="left:1826px;top:390px;width:54px;height:20px;background:#353535;border:1px solid #2c2c2c"></div>
<svg style="left:1868px;top:398px" width="7" height="5" viewBox="0 0 7 5"><path d="M0 0 L7 0 L3.5 4 Z" fill="#eeeeee"/></svg>
<svg style="left:1883px;top:393px" width="13" height="13" viewBox="0 0 13 13"><circle cx="6.5" cy="6.5" r="4" fill="none" stroke="#bdbdbd" stroke-width="2.5" stroke-dasharray="2 1.2"/><circle cx="6.5" cy="6.5" r="2.6" fill="none" stroke="#bdbdbd" stroke-width="1.6"/></svg>
<svg style="left:1902px;top:393px" width="10" height="14" viewBox="0 0 10 14"><path d="M2 6.5 L2 4 A3 3 0 0 1 8 4 L8 6.5" stroke="#b8b8b8" stroke-width="1.5" fill="none"/><rect x="0.5" y="6" width="9" height="7" fill="#b8b8b8"/></svg>
<div class="a" style="left:1651px;top:415px;width:269px;height:27px;background:#618bc7"></div>
<div class="a" style="left:1901px;top:423px;width:12px;height:12px;background:#3a3a3a;border:1px solid #222;border-radius:2px"></div>
<svg style="left:1902px;top:424px" width="10" height="10" viewBox="0 0 10 10"><path d="M1.5 5 L4 8 L8.5 1.5" stroke="#ffffff" stroke-width="1.8" fill="none"/></svg>
<div class="a" style="left:1651px;top:442px;width:269px;height:28px;background:#3a3a3a;border-top:1px solid #323844;border-bottom:1px solid #303030"></div>
<div class="a" style="left:1901px;top:451px;width:12px;height:12px;background:#555;border-radius:2px"></div>
<svg style="left:1902px;top:452px" width="10" height="10" viewBox="0 0 10 10"><path d="M1.5 5 L4 8 L8.5 1.5" stroke="#ffffff" stroke-width="1.8" fill="none"/></svg>
<!-- layers toolbar -->
<div class="a" style="left:1651px;top:845px;width:269px;height:21px;background:#414141;border-top:1px solid #363636"></div>
<svg style="left:1653px;top:847px" width="16" height="16" viewBox="0 0 16 16"><rect x="0" y="0" width="16" height="16" fill="#262626"/><path d="M2 5 L8 2 L14 5 L8 8 Z" fill="#d8d8d8"/><path d="M2 8 L8 11 L14 8 M2 11 L8 14 L14 11" stroke="#d8d8d8" stroke-width="1.3" fill="none"/></svg>
<svg style="left:1728px;top:848px" width="15" height="13" viewBox="0 0 15 13"><rect x="0" y="0" width="15" height="13" fill="#d8d8d8"/><circle cx="7.5" cy="6.5" r="4" fill="#555"/></svg>
<svg style="left:1748px;top:848px" width="14" height="14" viewBox="0 0 14 14"><circle cx="7" cy="7" r="6" fill="#d8d8d8"/><path d="M10 2 L4 12" stroke="#444" stroke-width="1.2"/><path d="M7 1 A6 6 0 0 1 7 13 Z" fill="#555" opacity="0.5"/></svg>
<div class="t" style="left:1768px;top:846px;font-family:'Liberation Serif',serif;font-style:italic;font-size:15px;color:#e0e0e0">fx</div>
<svg style="left:1788px;top:848px" width="14" height="14" viewBox="0 0 14 14"><path d="M1 1 L13 1 L7 7 L13 13 L1 13 L7 7 Z" fill="#d8d8d8"/></svg>
<svg style="left:1861px;top:848px" width="16" height="13" viewBox="0 0 16 13"><path d="M0 2 L6 2 L7 3.5 L16 3.5 L16 13 L0 13 Z" fill="#9a9a9a"/></svg>
<svg style="left:1884px;top:847px" width="12" height="15" viewBox="0 0 12 15"><path d="M0 0 L8 0 L12 4 L12 15 L0 15 Z" fill="#c8c8c8"/><path d="M1 3 L11 13 M1 7 L7 13 M1 11 L3 13 M4 1 L11 8 M8 1 L11 4" stroke="#666" stroke-width="0.9"/></svg>
<svg style="left:1903px;top:847px" width="12" height="15" viewBox="0 0 12 15"><rect x="0" y="1" width="12" height="2" fill="#c8c8c8"/><path d="M1 4 L11 4 L10 15 L2 15 Z" fill="#c8c8c8"/><path d="M4 5 L4 14 M6 5 L6 14 M8 5 L8 14" stroke="#555" stroke-width="0.8"/></svg>
<!-- navigator tabs -->
<div class="a" style="left:1651px;top:866px;width:269px;height:24px;background:#272727"></div>
<div class="a" style="left:1659px;top:872px;width:1px;height:12px;background:#6a6a6a"></div>
<div class="a" style="left:1662px;top:872px;width:1px;height:12px;background:#6a6a6a"></div>
<div class="a" style="left:1831px;top:868px;width:52px;height:22px;background:#414141"></div>
<div class="t" style="left:1674px;top:872px;font-size:11px;color:#cfcfcf">Navigator</div>
<div class="t" style="left:1732px;top:872px;font-size:11px;color:#cfcfcf">Transform</div>
<div class="t" style="left:1790px;top:872px;font-size:11px;color:#cfcfcf">History</div>
<div class="t" style="left:1834px;top:872px;font-size:11px;color:#f0f0f0">Channels</div>
<!-- channels -->
<div class="a" style="left:1651px;top:890px;width:269px;height:31px;background:#414141"></div>
<div class="t" style="left:1655px;top:900px;font-size:11px;color:#e8e8e8">RGBA/8 - * wsRGB</div>
<svg style="left:1903px;top:900px" width="13" height="13" viewBox="0 0 13 13"><path d="M10.5 3 A5 5 0 1 1 4 1.8" stroke="#9a9a9a" stroke-width="1.8" fill="none"/><path d="M2 0 L6 1.5 L3 4.5 Z" fill="#9a9a9a"/></svg>
<div class="a" style="left:1651px;top:921px;width:251px;height:120px;background:#333333"></div>
<div class="a" style="left:1902px;top:921px;width:18px;height:133px;background:#3d3d3d"></div>
<div class="a" style="left:1651px;top:1041px;width:251px;height:6px;background:#414141"></div>
<div class="a" style="left:1651px;top:1047px;width:251px;height:7px;background:#383838"></div>
<div class="a" style="left:1655px;top:1052px;width:18px;height:2px;background:#d01010"></div>
<svg style="left:1907px;top:926px" width="8" height="7" viewBox="0 0 8 7"><path d="M0 7 L8 7 L4 0 Z" fill="#7a7a7a"/></svg>
<div class="a" style="left:1907px;top:939px;width:8px;height:46px;background:#7a7a7a;border-radius:4px"></div>
<svg style="left:1907px;top:1041px" width="8" height="7" viewBox="0 0 8 7"><path d="M0 0 L8 0 L4 7 Z" fill="#7a7a7a"/></svg>

<div class="a" style="left:1655px;top:926px;width:18px;height:18px;box-shadow:0 0 0 1px #222;background:linear-gradient(#ff0000,#200000)"></div>
<div class="a" style="left:1655px;top:956px;width:18px;height:18px;box-shadow:0 0 0 1px #222;background:linear-gradient(#00e000,#002000)"></div>
<div class="a" style="left:1655px;top:986px;width:18px;height:18px;box-shadow:0 0 0 1px #222;background:linear-gradient(#0000f0,#000018)"></div>
<div class="a" style="left:1655px;top:1016px;width:18px;height:18px;box-shadow:0 0 0 1px #222;background:#ffffff"></div>
<div class="t" style="left:1679px;top:930px;font-size:11px;color:#ececec">Composite Red</div>
<div class="t" style="left:1679px;top:960px;font-size:11px;color:#ececec">Composite Green</div>
<div class="t" style="left:1679px;top:990px;font-size:11px;color:#ececec">Composite Blue</div>
<div class="t" style="left:1679px;top:1020px;font-size:11px;color:#ececec">Composite Alpha</div>
<svg style="left:1865px;top:930px" width="15" height="12" viewBox="0 0 15 12"><path d="M1 6 C4 1 11 1 14 6" stroke="#c8c8c8" stroke-width="1.6" fill="none"/><circle cx="7.5" cy="7" r="3" fill="#c8c8c8"/><circle cx="7.5" cy="7" r="1.2" fill="#333"/></svg>
<svg style="left:1886px;top:930px" width="12" height="13" viewBox="0 0 12 13"><path d="M2 11 L10 2" stroke="#d8d8d8" stroke-width="3"/><path d="M1 12 L2 10" stroke="#d8d8d8" stroke-width="1.5"/></svg>
<svg style="left:1865px;top:960px" width="15" height="12" viewBox="0 0 15 12"><path d="M1 6 C4 1 11 1 14 6" stroke="#c8c8c8" stroke-width="1.6" fill="none"/><circle cx="7.5" cy="7" r="3" fill="#c8c8c8"/><circle cx="7.5" cy="7" r="1.2" fill="#333"/></svg>
<svg style="left:1886px;top:960px" width="12" height="13" viewBox="0 0 12 13"><path d="M2 11 L10 2" stroke="#d8d8d8" stroke-width="3"/><path d="M1 12 L2 10" stroke="#d8d8d8" stroke-width="1.5"/></svg>
<svg style="left:1865px;top:990px" width="15" height="12" viewBox="0 0 15 12"><path d="M1 6 C4 1 11 1 14 6" stroke="#c8c8c8" stroke-width="1.6" fill="none"/><circle cx="7.5" cy="7" r="3" fill="#c8c8c8"/><circle cx="7.5" cy="7" r="1.2" fill="#333"/></svg>
<svg style="left:1886px;top:990px" width="12" height="13" viewBox="0 0 12 13"><path d="M2 11 L10 2" stroke="#d8d8d8" stroke-width="3"/><path d="M1 12 L2 10" stroke="#d8d8d8" stroke-width="1.5"/></svg>
<svg style="left:1865px;top:1020px" width="15" height="12" viewBox="0 0 15 12"><path d="M1 6 C4 1 11 1 14 6" stroke="#c8c8c8" stroke-width="1.6" fill="none"/><circle cx="7.5" cy="7" r="3" fill="#c8c8c8"/><circle cx="7.5" cy="7" r="1.2" fill="#333"/></svg>
<svg style="left:1886px;top:1020px" width="12" height="13" viewBox="0 0 12 13"><path d="M2 11 L10 2" stroke="#d8d8d8" stroke-width="3"/><path d="M1 12 L2 10" stroke="#d8d8d8" stroke-width="1.5"/></svg>
<!-- dialog -->
<div class="a" style="left:1314px;top:169px;width:546px;height:451px;background:#404040;border:1px solid #484848;box-shadow:0 0 0 1px #2a2a2a"></div>
<div class="a" style="left:1315px;top:170px;width:544px;height:21px;background:#3b3b3b"></div>
<div class="t" style="left:1547px;top:175px;font-size:12px;color:#f0f0f0">Blend Options</div>
<svg style="left:1844px;top:176px" width="11" height="11" viewBox="0 0 11 11"><path d="M0.7 0.7 L10.3 10.3 M10.3 0.7 L0.7 10.3" stroke="#f0f0f0" stroke-width="1.6"/></svg>
<div class="t" style="left:1405px;top:209px;font-size:10.6px;color:#e8e8e8">Blend Gamma:</div>
<div class="a" style="left:1479px;top:204px;width:75px;height:22px;background:#363636;border:1px solid #262626;box-shadow:0 1px 0 #505050,0 -1px 0 #4a4a4a"></div>
<div class="t" style="left:1485px;top:210px;font-size:11px;color:#e8e8e8">2.2</div>
<svg style="left:1543px;top:213px" width="7" height="5" viewBox="0 0 7 5"><path d="M0 0 L7 0 L3.5 4 Z" fill="#eeeeee"/></svg>
<div class="t" style="left:1630px;top:209px;font-size:11px;color:#e8e8e8">Coverage Map:</div>
<div class="a" style="left:1710px;top:204px;width:74px;height:22px;background:#393939;border:1px solid #343434"></div>
<svg style="left:1710px;top:204px" width="74" height="22" viewBox="0 0 74 22"><path d="M2 18.5 L72 4.5" stroke="#d8d8d8" stroke-width="1.1"/></svg>
<div class="a" style="left:1329px;top:233px;width:515px;height:1px;background:#2a2a2a"></div>
<div class="a" style="left:1329px;top:234px;width:515px;height:1px;background:#474747"></div>
<div class="a" style="left:1522px;top:245px;width:129px;height:19px;background:#363636;border:1px solid #262626;box-shadow:0 1px 0 #505050,0 -1px 0 #4a4a4a"></div>
<div class="t" style="left:1527px;top:248px;font-size:11px;color:#e8e8e8">Master</div>
<svg style="left:1640px;top:253px" width="7" height="5" viewBox="0 0 7 5"><path d="M0 0 L7 0 L3.5 4 Z" fill="#eeeeee"/></svg>
<div class="t" style="left:1329px;top:273px;font-size:10.4px;color:#e8e8e8">Source Layer Ranges</div>
<div class="t" style="left:1589px;top:272px;font-size:10.9px;color:#e8e8e8">Underlying Composition Ranges</div>

<svg style="left:1331px;top:293px" width="252" height="251" viewBox="0 0 252 251">
 <rect x="0.5" y="0.5" width="250" height="249" fill="#1a1a1a" stroke="#858585" stroke-width="1"/>
 <path d="M64.5 1 L64.5 249 M127 1 L127 249 M189.5 1 L189.5 249" stroke="#444444" stroke-width="1"/><path d="M1 63.5 L250 63.5 M1 125.5 L250 125.5 M1 188.5 L250 188.5" stroke="#555555" stroke-width="1"/>
 <path d="M2 1 L126 64 L250 1" stroke="#e0e0e0" stroke-width="1.4" fill="none"/>
 <circle cx="2" cy="1" r="4" fill="#f0f0f0"/>
 <circle cx="250" cy="1" r="4" fill="#f0f0f0"/>
 <circle cx="126" cy="64" r="4" fill="#111" stroke="#e8e8e8" stroke-width="1.2"/>
</svg>
<svg style="left:1592px;top:293px" width="252" height="251" viewBox="0 0 252 251">
 <rect x="0.5" y="0.5" width="249" height="249" fill="#1a1a1a" stroke="#858585" stroke-width="1"/>
 <path d="M63.5 1 L63.5 249 M126 1 L126 249 M188.5 1 L188.5 249" stroke="#444444" stroke-width="1"/><path d="M1 63.5 L249 63.5 M1 125.5 L249 125.5 M1 188.5 L249 188.5" stroke="#555555" stroke-width="1"/>
 <path d="M1 1 L249 1" stroke="#f0f0f0" stroke-width="2.2"/>
 <circle cx="1" cy="1" r="4" fill="#f0f0f0"/>
 <circle cx="249" cy="1" r="4" fill="#f0f0f0"/>
</svg>
<!-- cursor -->
<svg style="left:1456px;top:360px" width="13" height="19" viewBox="0 0 13 19"><path d="M1 1 L1 15 L4.3 12 L7 17.5 L9 16.5 L6.5 11.3 L11 11.3 Z" fill="#ffffff" stroke="#000" stroke-width="1.1" stroke-linejoin="round"/></svg>

<!-- in/out left -->
<div class="t" style="left:1392px;top:556px;font-size:11px;color:#e8e8e8">In:</div>
<div class="a" style="left:1408px;top:553px;width:74px;height:20px;background:#363636;border:1px solid #262626;box-shadow:0 1px 0 #505050,0 -1px 0 #4a4a4a"></div>
<div class="t" style="left:1414px;top:556px;font-size:11px;color:#e8e8e8">50.1 %</div>
<svg style="left:1473px;top:561px" width="7" height="5" viewBox="0 0 7 5"><path d="M0 0 L7 0 L3.5 4 Z" fill="#eeeeee"/></svg>
<div class="a" style="left:1489px;top:557px;width:11px;height:11px;background:#5c5c5c;border:1px solid #2a2a2a;border-radius:2px"></div>
<svg style="left:1489px;top:557px" width="10" height="11" viewBox="0 0 10 11"><path d="M1.5 5.5 L4 8.5 L8.5 2" stroke="#ffffff" stroke-width="1.6" fill="none"/></svg>
<div class="t" style="left:1504px;top:556px;font-size:11px;color:#e8e8e8">Linear</div>
<div class="t" style="left:1383px;top:586px;font-size:11px;color:#e8e8e8">Out:</div>
<div class="a" style="left:1408px;top:583px;width:74px;height:20px;background:#363636;border:1px solid #262626;box-shadow:0 1px 0 #505050,0 -1px 0 #4a4a4a"></div>
<div class="t" style="left:1414px;top:586px;font-size:11px;color:#e8e8e8">74.5 %</div>
<svg style="left:1473px;top:591px" width="7" height="5" viewBox="0 0 7 5"><path d="M0 0 L7 0 L3.5 4 Z" fill="#eeeeee"/></svg>
<div class="a" style="left:1488px;top:583px;width:49px;height:20px;background:#444444;border:1px solid #383838"></div>
<div class="t" style="left:1499px;top:586px;font-size:11px;color:#e8e8e8">Reset</div>
<!-- in/out right -->
<div class="t" style="left:1652px;top:556px;font-size:11px;color:#e8e8e8">In:</div>
<div class="a" style="left:1668px;top:553px;width:74px;height:20px;background:#393939;border:1px solid #2c2c2c;box-shadow:0 1px 0 #4c4c4c"></div>
<div class="t" style="left:1674px;top:556px;font-size:11px;color:#767676">0 %</div>
<svg style="left:1733px;top:561px" width="7" height="5" viewBox="0 0 7 5"><path d="M0 0 L7 0 L3.5 4 Z" fill="#777"/></svg>
<div class="a" style="left:1749px;top:557px;width:11px;height:11px;background:#5c5c5c;border:1px solid #2a2a2a;border-radius:2px"></div>
<svg style="left:1749px;top:557px" width="10" height="11" viewBox="0 0 10 11"><path d="M1.5 5.5 L4 8.5 L8.5 2" stroke="#ffffff" stroke-width="1.6" fill="none"/></svg>
<div class="t" style="left:1764px;top:556px;font-size:11px;color:#e8e8e8">Linear</div>
<div class="t" style="left:1643px;top:586px;font-size:11px;color:#e8e8e8">Out:</div>
<div class="a" style="left:1668px;top:583px;width:74px;height:20px;background:#393939;border:1px solid #2c2c2c;box-shadow:0 1px 0 #4c4c4c"></div>
<div class="t" style="left:1674px;top:586px;font-size:11px;color:#767676">0 %</div>
<svg style="left:1733px;top:591px" width="7" height="5" viewBox="0 0 7 5"><path d="M0 0 L7 0 L3.5 4 Z" fill="#777"/></svg>
<div class="a" style="left:1748px;top:583px;width:49px;height:20px;background:#444444;border:1px solid #383838"></div>
<div class="t" style="left:1759px;top:586px;font-size:11px;color:#e8e8e8">Reset</div>
</body></html>
